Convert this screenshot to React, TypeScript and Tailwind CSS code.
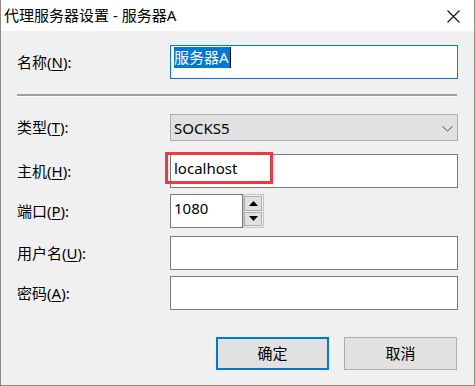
import React from "react";

const font = { fontFamily: '"Noto Sans", "Noto Sans CJK SC", sans-serif' };

function Label({ text, mn }: { text: string; mn: string }) {
    return (
        <div className="w-[153px] shrink-0 text-[15px] leading-[21px] text-black">
            {text}(<u className="underline-offset-2">{mn}</u>):
        </div>
    );
}

export default function App() {
    return (
        <div
            style={font}
            className="w-[475px] h-[386px] flex flex-col bg-[#f0f0f0] border-x border-b border-[#8a8a8a] text-black"
        >
            {/* Title bar */}
            <div className="h-[31px] shrink-0 bg-white flex items-center justify-between pl-[3px] pr-[14px]">
                <span className="text-[15px] leading-[21px]">代理服务器设置 - 服务器A</span>
                <svg width="13" height="13" viewBox="0 0 13 13" className="mt-[1px]">
                    <path d="M0.5 0.5 L12.5 12.5 M12.5 0.5 L0.5 12.5" stroke="#111" strokeWidth="1.1" />
                </svg>
            </div>

            <div className="flex flex-col pl-[16px] pr-[16px]">
                {/* Name */}
                <div className="mt-[14px] h-[34px] flex items-center">
                    <Label text="名称" mn="N" />
                    <div className="flex-1 h-[34px] bg-white border border-[#0078d7] pl-[3px] pt-[1px]">
                        <div className="flex items-start">
                            <span className="bg-[#0078d7] text-white text-[15px] leading-[21px] pr-[1px]">服务器A</span>
                            <span className="w-[1px] h-[21px] bg-black"></span>
                        </div>
                    </div>
                </div>

                {/* Separator */}
                <div className="mt-[15px] h-[3px] border-t-2 border-[#a0a0a0] border-b border-b-white mr-[1px]"></div>

                {/* Type */}
                <div className="mt-[17px] h-[27px] flex items-center">
                    <Label text="类型" mn="T" />
                    <div className="flex-1 h-[27px] bg-[#e1e1e1] border border-[#adadad] flex items-center justify-between pl-[3px] pr-[4px]">
                        <span className="text-[15px] leading-[21px] mt-[2px]">SOCKS5</span>
                        <svg width="11" height="6" viewBox="0 0 11 6" className="mt-[2px]">
                            <path d="M0.5 0.5 L5.5 5 L10.5 0.5" fill="none" stroke="#555" strokeWidth="1" />
                        </svg>
                    </div>
                </div>

                {/* Host */}
                <div className="mt-[13px] h-[34px] flex items-center">
                    <Label text="主机" mn="H" />
                    <div className="relative flex-1 h-[34px] bg-white border border-[#7a7a7a] pl-[3px] pt-[1px]">
                        <span className="text-[15px] leading-[21px]">localhost</span>
                        <div className="absolute left-[-6px] top-[-3px] w-[108px] h-[32px] border-[3px] border-[#ec3b3f]"></div>
                    </div>
                </div>

                {/* Port */}
                <div className="mt-[6px] h-[34px] flex items-center">
                    <Label text="端口" mn="P" />
                    <div className="w-[73px] h-[34px] bg-white border border-[#7a7a7a] pl-[3px] pt-[1px]">
                        <span className="text-[15px] leading-[21px]">1080</span>
                    </div>
                    <div className="w-[21px] h-[34px] border border-[#c4c4c4] flex flex-col gap-[1px] py-[1px] pr-[1px]">
                        <div className="flex-1 bg-[#e1e1e1] border border-[#adadad] flex items-center justify-center">
                            <svg width="9" height="5" viewBox="0 0 9 5"><path d="M0 5 L4.5 0 L9 5 Z" fill="#000" /></svg>
                        </div>
                        <div className="flex-1 bg-[#e1e1e1] border border-[#adadad] flex items-center justify-center">
                            <svg width="9" height="5" viewBox="0 0 9 5"><path d="M0 0 L9 0 L4.5 5 Z" fill="#000" /></svg>
                        </div>
                    </div>
                </div>

                {/* User */}
                <div className="mt-[8px] h-[34px] flex items-center">
                    <Label text="用户名" mn="U" />
                    <div className="flex-1 h-[34px] bg-white border border-[#7a7a7a]"></div>
                </div>

                {/* Password */}
                <div className="mt-[6px] h-[34px] flex items-center">
                    <Label text="密码" mn="A" />
                    <div className="flex-1 h-[34px] bg-white border border-[#7a7a7a]"></div>
                </div>

                {/* Buttons */}
                <div className="mt-[27px] flex justify-end gap-[15px] pr-[1px]">
                    <button className="w-[113px] h-[33px] bg-[#e1e1e1] border-2 border-[#0078d7] text-[15px] leading-[21px]">
                        确定
                    </button>
                    <button className="w-[113px] h-[33px] bg-[#e1e1e1] border border-[#adadad] text-[15px] leading-[21px]">
                        取消
                    </button>
                </div>
            </div>
        </div>
    );
}
